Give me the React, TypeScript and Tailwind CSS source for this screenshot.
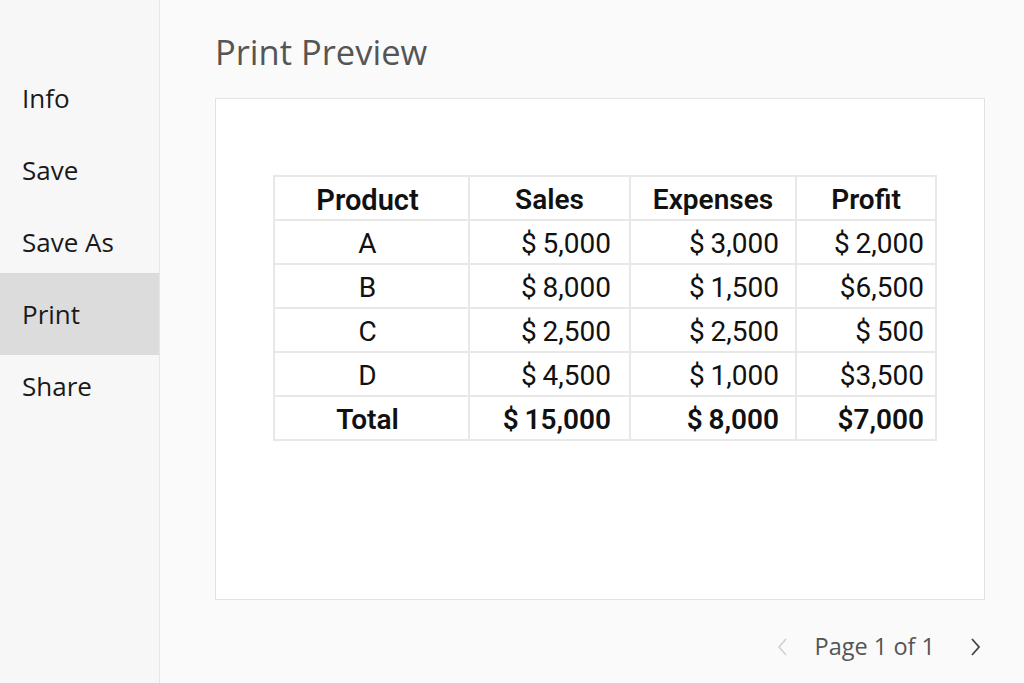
import React from "react";

const T = "\u2009";
const rows = [
  ["A", `$${T}5,000`, `$${T}3,000`, `$${T}2,000`],
  ["B", `$${T}8,000`, `$${T}1,500`, "$6,500"],
  ["C", `$${T}2,500`, `$${T}2,500`, `$${T}500`],
  ["D", `$${T}4,500`, `$${T}1,000`, "$3,500"],
];

export default function App() {
  const items = ["Info", "Save", "Save As", "Print", "Share"];
  const cell = "border-2 border-[#e8e8e8] pt-[4px] leading-[36px]";
  return (
    <div className="flex w-[1024px] h-[683px] bg-[#fafafa] overflow-hidden" style={{ fontFamily: "'Open Sans', 'Noto Sans', sans-serif" }}>
      <div className="w-[160px] shrink-0 bg-[#f7f7f7] border-r border-[#e6e6e6] pt-[62px]">
        {items.map((it) =>
          it === "Print" ? (
            <div key={it} className="h-[82px] -my-[5px] bg-[#dcdcdc] flex items-center pl-[22px] text-[26px] text-[#1a1a1a]">
              {it}
            </div>
          ) : (
            <div key={it} className="h-[72px] flex items-center pl-[22px] text-[26px] text-[#1a1a1a]">
              {it}
            </div>
          )
        )}
      </div>
      <div className="flex-1 flex flex-col pl-[55px] pr-[39px]">
        <div className="h-[98px] flex items-start pt-[26px] text-[34.5px] text-[#555555] leading-[52px]">Print Preview</div>
        <div className="h-[502px] bg-white border border-[#e2e2e2] pt-[76px] pl-[57px]">
          <table className="table-fixed w-[662px] border-collapse text-[28px] text-[#111]" style={{ fontFamily: "Roboto, 'Liberation Sans', sans-serif" }}>
            <colgroup>
              <col className="w-[195px]" />
              <col className="w-[161px]" />
              <col className="w-[166px]" />
              <col className="w-[140px]" />
            </colgroup>
            <thead>
              <tr className="h-[44px]">
                <th className={`${cell} font-semibold text-center pr-[8px] text-[29px]`}>Product</th>
                <th className={`${cell} font-semibold text-center`}>Sales</th>
                <th className={`${cell} font-semibold text-center`}>Expenses</th>
                <th className={`${cell} font-semibold text-center`}>Profit</th>
              </tr>
            </thead>
            <tbody>
              {rows.map((r) => (
                <tr key={r[0]} className="h-[44px]">
                  <td className={`${cell} text-center pr-[8px]`}>{r[0]}</td>
                  <td className={`${cell} text-right pr-[18px]`}>{r[1]}</td>
                  <td className={`${cell} text-right pr-[16px]`}>{r[2]}</td>
                  <td className={`${cell} text-right pr-[11px]`}>{r[3]}</td>
                </tr>
              ))}
              <tr className="h-[44px] font-semibold">
                <td className={`${cell} text-center pr-[8px]`}>Total</td>
                <td className={`${cell} text-right pr-[18px]`}>{`$${T}15,000`}</td>
                <td className={`${cell} text-right pr-[16px]`}>{`$${T}8,000`}</td>
                <td className={`${cell} text-right pr-[11px]`}>$7,000</td>
              </tr>
            </tbody>
          </table>
        </div>
        <div className="flex-1 flex items-center justify-end pr-[2px] text-[23.5px] text-[#555] pt-[10px]">
          <svg width="14" height="22" viewBox="0 0 14 22" className="mr-[26px]">
            <path d="M11 3 L4 11 L11 19" fill="none" stroke="#d0d0d0" strokeWidth="1.6" />
          </svg>
          <span>Page 1 of 1</span>
          <svg width="14" height="22" viewBox="0 0 14 22" className="ml-[34px]">
            <path d="M3 3 L10 11 L3 19" fill="none" stroke="#444" strokeWidth="1.8" />
          </svg>
        </div>
      </div>
    </div>
  );
}
